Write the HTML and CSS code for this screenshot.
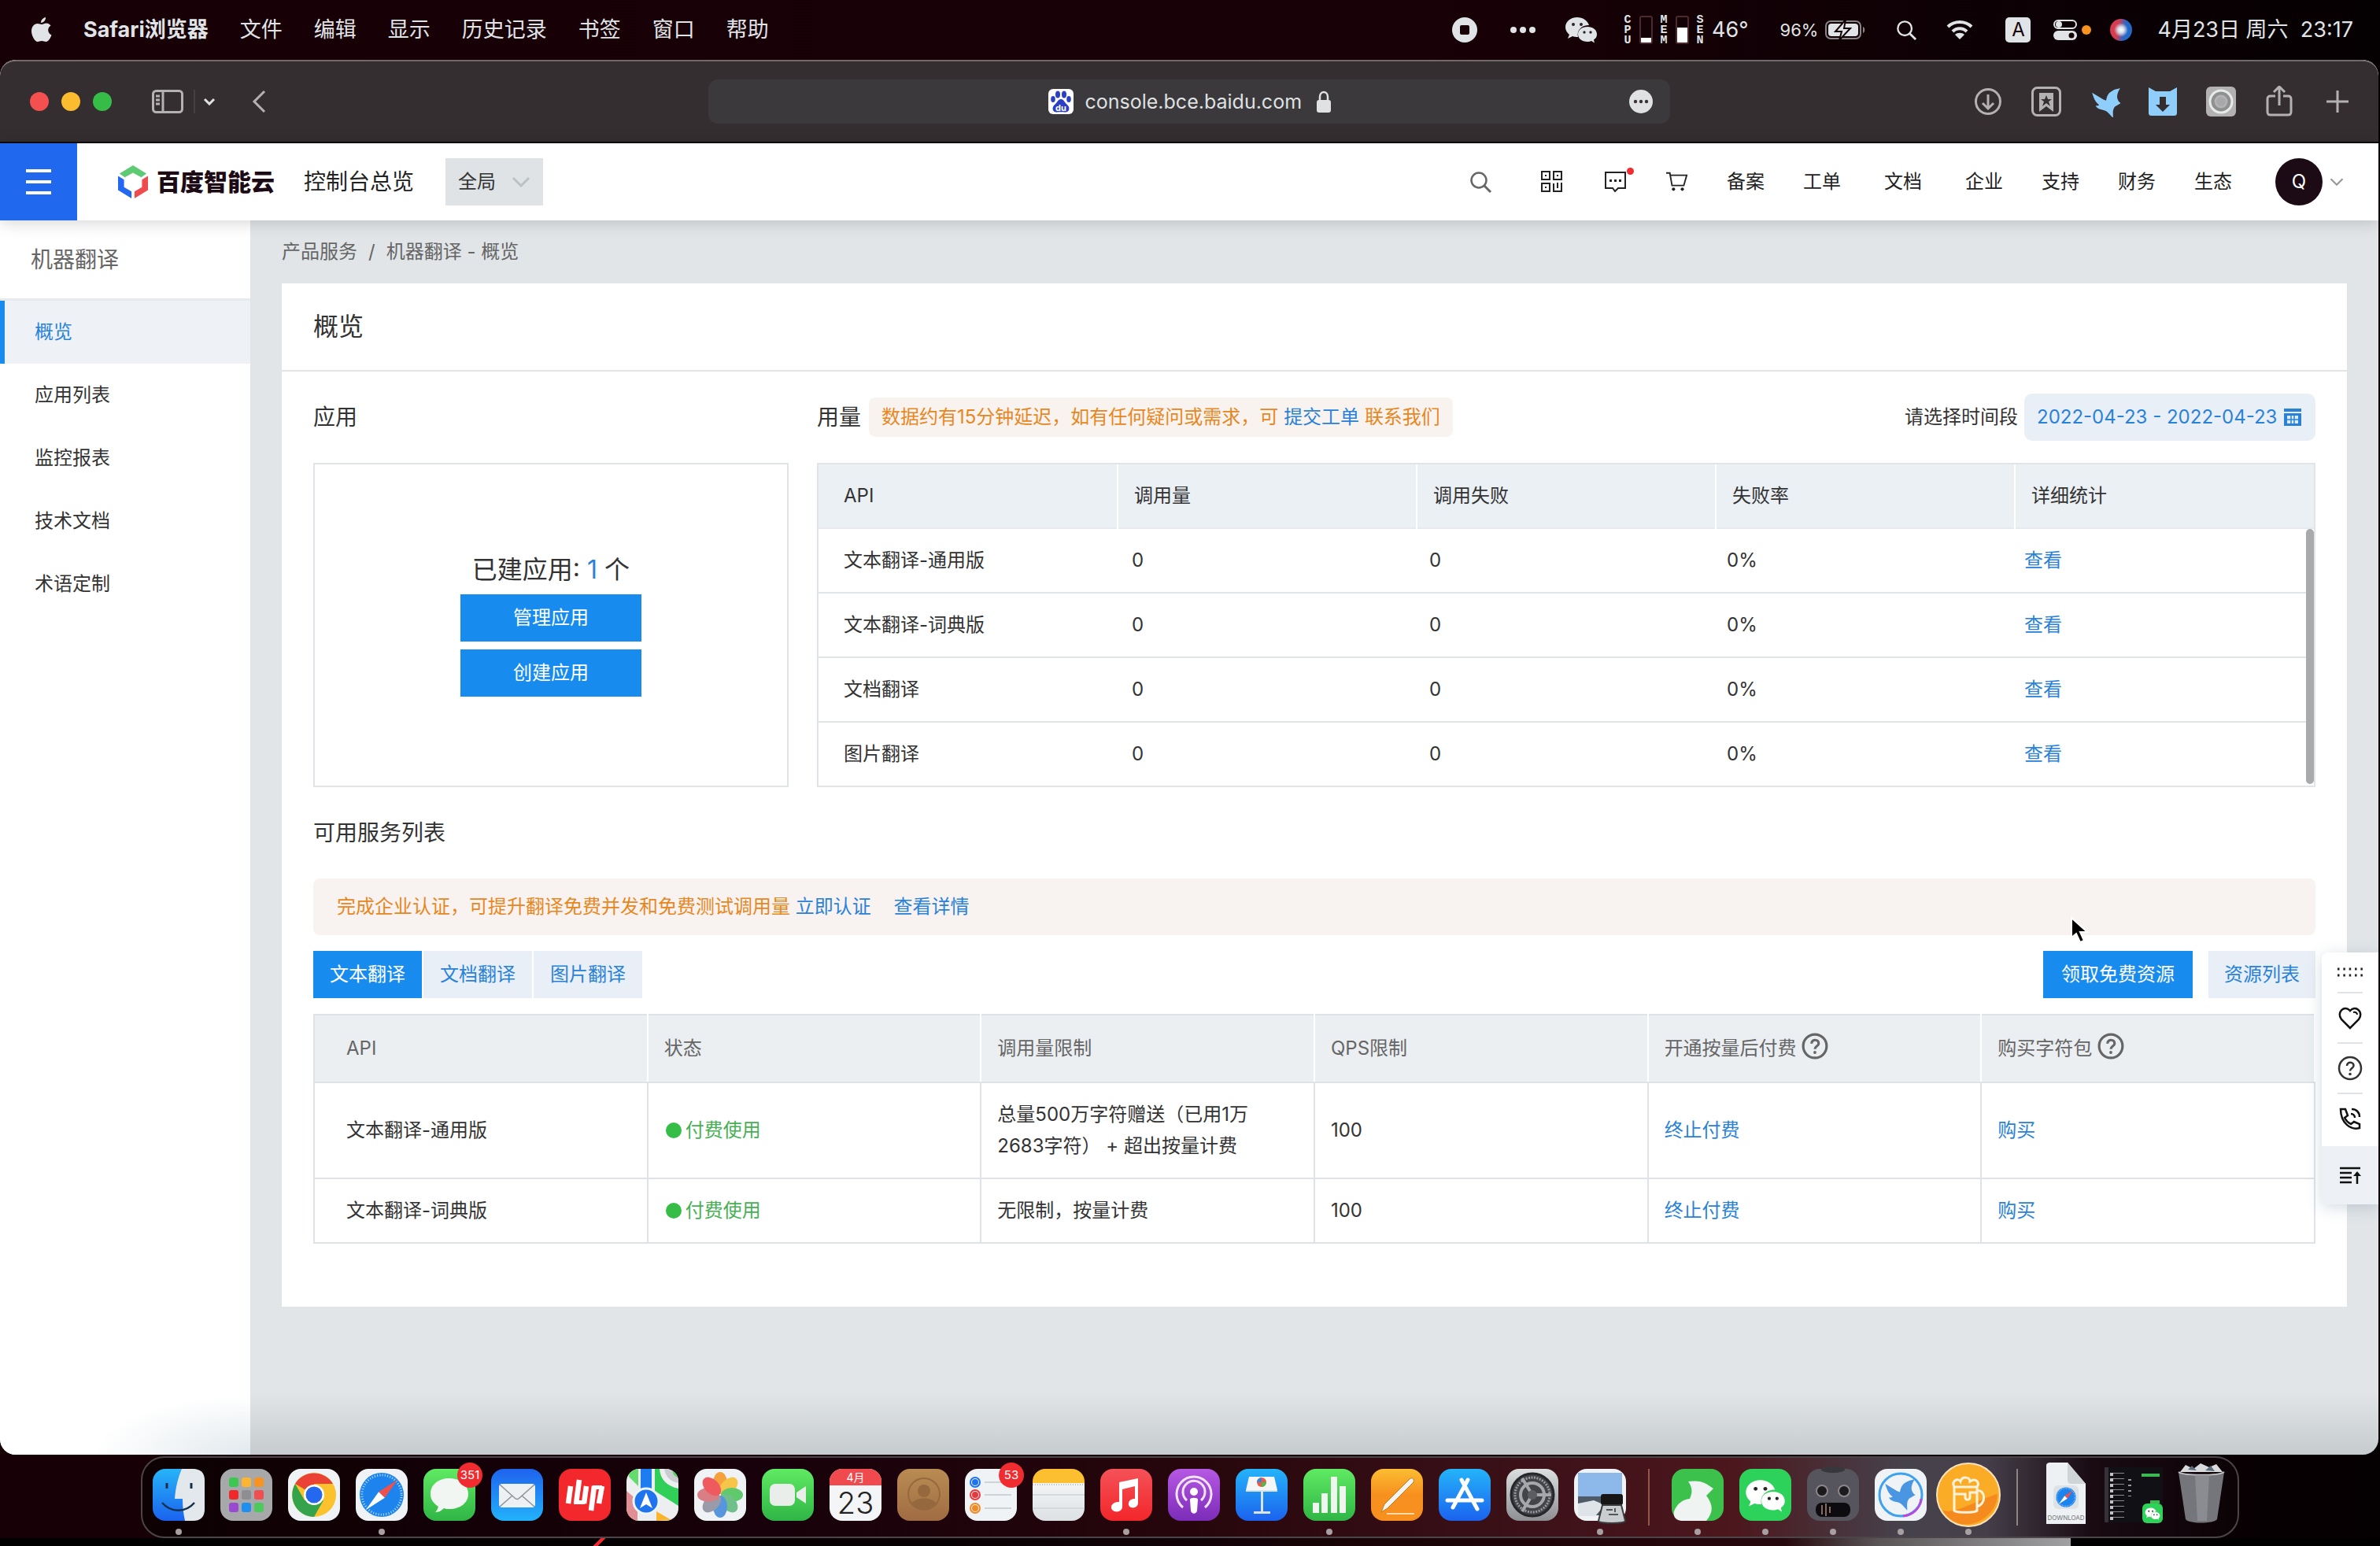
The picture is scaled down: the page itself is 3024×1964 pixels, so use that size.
FILE: index.html
```html
<!DOCTYPE html>
<html lang="zh-CN">
<head>
    <meta charset="UTF-8">
    <title>机器翻译 - 概览</title>
    <link rel="stylesheet" href="styles.css">
</head>
<body>
    <!-- 公用图形 -->
    <svg class="defs" aria-hidden="true">
        <symbol id="wechat" viewBox="0 0 42 34">
            <path d="M16 1C7 1 1 7 1 13.500c0 4 2 7 5 9.500l-2 5 6-3c2 .6 4 1 7 1-2-9 5-15 14-15C29 5 23 1 16 1z"/>
            <path d="M29 13c-7 0-12 4-12 9.500S22 32 29 32c2 0 3-.3 5-1l4 2.500-1-4c3-2 4-4 4-7C41 17 36 13 29 13z"/>
            <g class="eye"><circle cx="11" cy="10" r="2"/><circle cx="21" cy="10" r="2"/><circle cx="25" cy="20" r="1.700"/><circle cx="33" cy="20" r="1.700"/></g>
        </symbol>
        <symbol id="bird" viewBox="0 0 36 36">
            <path d="M2 6l13 8 3 1c1-6 3-9 7-11 3-2 6-2 9-3-3 5-4 9-3 12 1 3 2 4 4 5l-7 4c-3 4-2 7-2 13-4-4-6-8-11-9-6-1-8-3-9-5 2 0 3 0 4-1-4-3-6-7-8-14z"/>
        </symbol>
        <symbol id="question" viewBox="0 0 32 32">
            <circle cx="16" cy="16" r="14" fill="none" stroke="currentColor"/>
            <path d="M12 13c0-6 9-5.500 8.500 0-.3 3-4.500 3-4.500 6.500" fill="none" stroke="currentColor"/>
            <circle cx="16" cy="23.500" r="1.800" fill="currentColor"/>
        </symbol>
        <symbol id="magnifier" viewBox="0 0 28 28">
            <circle cx="12" cy="12" r="9.500" fill="none" stroke="currentColor" stroke-width="2.500"/>
            <path d="M19 19l8 8" stroke="currentColor" stroke-width="3"/>
        </symbol>
        <symbol id="down" viewBox="0 0 24 14">
            <path d="M2 2l10 10L22 2" fill="none" stroke="currentColor" stroke-width="3"/>
        </symbol>
        <symbol id="compass" viewBox="0 0 60 60">
            <circle cx="30" cy="30" r="29" fill="#1d84ee"/>
            <circle cx="30" cy="30" r="26" fill="none" stroke="#bfe2ff" stroke-width="3" stroke-dasharray="1 2.400"/>
            <path d="M51 10L26 26l8 8z" fill="#f0504a"/>
            <path d="M9 50l17-24 8 8z" fill="#fff"/>
        </symbol>
    </svg>

    <!-- 系统菜单栏 -->
    <div class="menubar">
        <svg class="apple" viewBox="0 0 26 32"><path d="M18 0c.3 4-3 7-6 7 0-4 3-6.500 6-7zM13 9c2 0 3-1.500 6-1.500 2.500 0 4.500 1.500 5.500 3-5 3-4 10 1 12-1.500 4-4 8.500-7 8.500-2 0-3-1-5.500-1S9.500 31 8 31C4 31 0 23 0 17.500S3.500 8 7.500 8C10 8 11.500 9 13 9z"/></svg>
        <b>Safari浏览器</b>
        <span>文件</span><span>编辑</span><span>显示</span><span>历史记录</span><span>书签</span><span>窗口</span><span>帮助</span>
        <div class="status">
            <svg class="s-rec" viewBox="0 0 32 32"><circle cx="16" cy="16" r="16" fill="#e0e4e6"/><rect x="10" y="10" width="12" height="12" rx="2" fill="#170207"/></svg>
            <svg class="s-dots" viewBox="0 0 32 8"><circle cx="4" cy="4" r="4"/><circle cx="16" cy="4" r="4"/><circle cx="28" cy="4" r="4"/></svg>
            <svg class="s-wechat"><use href="#wechat"/></svg>
            <span class="meter">C<br>P<br>U</span><i class="gauge low"></i>
            <span class="meter">M<br>E<br>M</span><i class="gauge high"></i>
            <span class="meter">S<br>E<br>N</span><span class="degree">46°</span>
            <span class="percent">96%</span>
            <svg class="s-battery" viewBox="0 0 52 26"><rect x="1" y="2" width="44" height="22" rx="6" fill="none" stroke="#8a8486" stroke-width="2"/><rect x="4" y="5" width="38" height="16" rx="4" fill="#e0e4e6"/><path d="M48 9c3 1 3 7 0 8z" fill="#8a8486"/><path d="M26 0L13 15h8l-3 11 14-15h-8z" fill="#e0e4e6" stroke="#120206" stroke-width="2"/></svg>
            <svg class="s-search"><use href="#magnifier"/></svg>
            <svg class="s-wifi" viewBox="0 0 34 26"><g fill="none" stroke="#e0e4e6" stroke-width="4"><path d="M2 9c8-8 22-8 30 0"/><path d="M8 15c5-5 13-5 18 0"/></g><path d="M11 19c3-3 9-3 12 0l-6 6z" fill="#e0e4e6"/></svg>
            <span class="ime">A</span>
            <svg class="s-control" viewBox="0 0 30 26"><rect x="1" y="1" width="28" height="10" rx="5" fill="none" stroke="#e0e4e6" stroke-width="2"/><circle cx="7" cy="6" r="4" fill="#e0e4e6"/><rect y="14" width="30" height="12" rx="6" fill="#e0e4e6"/><circle cx="23" cy="20" r="3.500" fill="#120206"/></svg>
            <i class="orange"></i><i class="siri"></i>
            <time>4月23日 周六&nbsp; 23:17</time>
        </div>
    </div>

    <div class="window">
        <!-- Safari 工具栏 -->
        <div class="toolbar">
            <div class="tools left">
                <div class="lights"><i class="red"></i><i class="yellow"></i><i class="green"></i></div>
                <button class="tool sidebar-btn" aria-label="边栏"><svg viewBox="0 0 40 30"><rect x="1.500" y="1.500" width="37" height="27" rx="4"/><path d="M14 1v28M5 8h5M5 13h5M5 18h5"/></svg></button>
                <button class="tool groups-btn" aria-label="标签页组"><svg viewBox="0 0 16 10"><path d="M2 2l6 6 6-6"/></svg></button>
                <button class="tool back-btn" aria-label="后退"><svg viewBox="0 0 18 30"><path d="M16 2L3 15l13 13"/></svg></button>
            </div>
            <div class="address">
                <svg class="favicon" viewBox="0 0 32 32"><rect width="32" height="32" rx="6" fill="#fff"/><g fill="#2a3fc4"><ellipse cx="12" cy="7" rx="3" ry="4.500"/><ellipse cx="20" cy="7" rx="3" ry="4.500"/><ellipse cx="6" cy="13" rx="2.800" ry="4"/><ellipse cx="26" cy="13" rx="2.800" ry="4"/><path d="M16 13c4 0 5 5 9 8 3 4 1 9-4 8.500-3-.5-7-.5-10 0C6 30 4 25 7 21c4-3 5-8 9-8z"/></g><text x="16" y="28" text-anchor="middle" font-size="11" font-weight="700" fill="#fff">du</text></svg>
                <input class="url" type="text" aria-label="网址" value="console.bce.baidu.com">
                <svg class="lock" viewBox="0 0 18 28"><rect y="12" width="18" height="16" rx="3" fill="#dfe1e3"/><path d="M4 13V8c0-8 10-8 10 0v5" fill="none" stroke="#dfe1e3" stroke-width="2.500"/></svg>
                <button class="page-menu" aria-label="页面菜单"><svg viewBox="0 0 30 30"><circle cx="15" cy="15" r="15" fill="#dfe1e3"/><g fill="#3a3436"><circle cx="8" cy="15" r="2.200"/><circle cx="15" cy="15" r="2.200"/><circle cx="22" cy="15" r="2.200"/></g></svg></button>
            </div>
            <div class="tools right">
                <button class="tool" aria-label="下载"><svg viewBox="0 0 40 40"><circle cx="20" cy="20" r="15.500"/><path d="M20 11v17M13 22l7 7 7-7"/></svg></button>
                <button class="tool" aria-label="收藏"><svg viewBox="0 0 40 40"><rect x="2.500" y="2.500" width="35" height="35" rx="6"/><path class="solid" d="M11 9h18v24l-9-7-9 7z"/><path class="hole" d="M20 12l2 5h5l-4 3 2 6-5-4-5 4 2-6-4-3h5z"/></svg></button>
                <button class="tool" aria-label="迅雷"><svg class="blue" viewBox="-2 -2 40 40"><use href="#bird"/></svg></button>
                <button class="tool" aria-label="下载助手"><svg class="cat" viewBox="0 0 40 40"><path d="M2 2l9 5h18l9-5v32c0 3-1 4-4 4H6c-3 0-4-1-4-4z"/><path d="M16 14h8v10h5L20 33l-9-9h5z" class="hole"/></svg></button>
                <button class="tool" aria-label="镜头"><svg viewBox="0 0 40 40"><rect class="solid" x="1" y="1" width="38" height="38" rx="6"/><circle cx="20" cy="20" r="14" fill="#8e9092" stroke="#e8eaea" stroke-width="3"/><circle cx="20" cy="20" r="7" fill="#a6a8a9"/></svg></button>
                <button class="tool" aria-label="共享"><svg viewBox="0 0 40 40"><path d="M15 13H9c-3 0-4 1-4 4v16c0 3 1 4 4 4h22c3 0 4-1 4-4V17c0-3-1-4-4-4h-6M20 25V2M13 8l7-7 7 7"/></svg></button>
                <button class="tool" aria-label="新标签页"><svg viewBox="0 0 40 40"><path d="M20 6v28M6 20h28"/></svg></button>
            </div>
        </div>

        <!-- 控制台顶栏 -->
        <header class="header">
            <button class="burger" aria-label="菜单"><i></i><i></i><i></i></button>
            <a class="logo" href="#">
                <svg viewBox="0 0 40 44"><path d="M20 0l18 11-7 5-11-6-11 6-7-5z" fill="#5fca74"/><path d="M0 14l8 5v10l10 6v9L0 33z" fill="#2468f2"/><path d="M40 14l-8 5v10l-10 6v9l18-11z" fill="#ee4c4f"/></svg>
                百度智能云
            </a>
            <a class="overview" href="#">控制台总览</a>
            <label class="region"><select aria-label="区域"><option>全局</option></select><svg><use href="#down"/></svg></label>
            <nav class="topnav">
                <button class="n-search" aria-label="搜索"><svg><use href="#magnifier"/></svg></button>
                <button class="n-qr" aria-label="二维码"><svg viewBox="0 0 28 28"><g fill="none" stroke="#222" stroke-width="2"><rect x="1" y="1" width="10" height="10"/><rect x="16" y="1" width="10" height="10"/><rect x="1" y="16" width="10" height="10"/><path d="M16 27V16M21 15v7M26 15v11H16"/></g><g fill="#222"><path d="M5 5h2v2H5zM20 5h2v2h-2zM5 20h2v2H5z"/></g></svg></button>
                <button class="n-msg" aria-label="消息"><svg viewBox="0 0 28 28"><path d="M1 2h25v20h-9l-4 4-3-4H1z" fill="none" stroke="#222" stroke-width="2"/><path d="M6 11h3v3H6zM12 11h3v3h-3zM18 11h3v3h-3z" fill="#222"/></svg><i class="dot"></i></button>
                <button class="n-cart" aria-label="购物车"><svg viewBox="0 0 30 28"><path d="M0 2h5l3 17h16l4-14H6" fill="none" stroke="#222" stroke-width="2"/><circle cx="10" cy="24" r="2.200" fill="#222"/><circle cx="22" cy="24" r="2.200" fill="#222"/></svg></button>
                <a href="#">备案</a><a href="#">工单</a><a class="wide" href="#">文档</a><a class="wide" href="#">企业</a><a href="#">支持</a><a href="#">财务</a><a href="#">生态</a>
                <button class="avatar">Q</button>
                <svg class="more"><use href="#down"/></svg>
            </nav>
        </header>

        <div class="page">
            <aside class="sidebar">
                <h2>机器翻译</h2>
                <a class="active" href="#">概览</a>
                <a href="#">应用列表</a>
                <a href="#">监控报表</a>
                <a href="#">技术文档</a>
                <a href="#">术语定制</a>
            </aside>

            <main class="main">
                <div class="crumbs"><a href="#">产品服务</a><span>/</span><span>机器翻译 - 概览</span></div>
                <section class="card">
                    <h1>概览</h1>
                    <div class="content">
                        <div class="top">
                            <div class="apps">
                                <div class="bar"><h3>应用</h3></div>
                                <div class="appbox">
                                    <p>已建应用: <a href="#">1</a> 个</p>
                                    <button class="btn">管理应用</button>
                                    <button class="btn">创建应用</button>
                                </div>
                            </div>
                            <div class="usage">
                                <div class="bar">
                                    <h3>用量</h3>
                                    <span class="tip">数据约有15分钟延迟，如有任何疑问或需求，可 <a href="#">提交工单</a> 联系我们</span>
                                    <label class="range-label" for="range">请选择时间段</label>
                                    <span class="range">
                                        <input id="range" type="text" value="2022-04-23 - 2022-04-23">
                                        <svg viewBox="0 0 22 22"><path d="M0 0h22v4H0zM0 6h22v16H0z" fill="#2a82d8"/><path d="M4 9h14v10H4z" fill="#dcecfa"/><path d="M4 14h14M9 9v10M13 9v10" stroke="#2a82d8" stroke-width="1.500"/></svg>
                                    </span>
                                </div>
                                <div class="stat">
                                    <table>
                                        <thead><tr><th>API</th><th>调用量</th><th>调用失败</th><th>失败率</th><th>详细统计</th></tr></thead>
                                    </table>
                                    <div class="scroll">
                                        <table>
                                            <tbody>
                                                <tr><td>文本翻译-通用版</td><td>0</td><td>0</td><td>0%</td><td><a href="#">查看</a></td></tr>
                                                <tr><td>文本翻译-词典版</td><td>0</td><td>0</td><td>0%</td><td><a href="#">查看</a></td></tr>
                                                <tr><td>文档翻译</td><td>0</td><td>0</td><td>0%</td><td><a href="#">查看</a></td></tr>
                                                <tr><td>图片翻译</td><td>0</td><td>0</td><td>0%</td><td><a href="#">查看</a></td></tr>
                                            </tbody>
                                        </table>
                                        <i class="thumb"></i>
                                    </div>
                                </div>
                            </div>
                        </div>

                        <h3 class="list-title">可用服务列表</h3>
                        <div class="notice">完成企业认证，可提升翻译免费并发和免费测试调用量 <a href="#">立即认证</a> <a class="detail" href="#">查看详情</a></div>
                        <div class="actions">
                            <button class="tab on">文本翻译</button><button class="tab">文档翻译</button><button class="tab">图片翻译</button>
                            <button class="btn free">领取免费资源</button>
                            <button class="tab res">资源列表</button>
                        </div>
                        <table class="service">
                            <thead>
                                <tr><th>API</th><th>状态</th><th>调用量限制</th><th>QPS限制</th><th>开通按量后付费 <svg><use href="#question"/></svg></th><th>购买字符包 <svg><use href="#question"/></svg></th></tr>
                            </thead>
                            <tbody>
                                <tr><td>文本翻译-通用版</td><td class="paid"><i></i>付费使用</td><td>总量500万字符赠送（已用1万<br>2683字符） + 超出按量计费</td><td>100</td><td><a href="#">终止付费</a></td><td><a href="#">购买</a></td></tr>
                                <tr><td>文本翻译-词典版</td><td class="paid"><i></i>付费使用</td><td>无限制，按量计费</td><td>100</td><td><a href="#">终止付费</a></td><td><a href="#">购买</a></td></tr>
                            </tbody>
                        </table>
                    </div>
                </section>
            </main>

            <!-- 悬浮工具条 -->
            <div class="float">
                <svg class="grip" viewBox="0 0 32 12"><path d="M0 2h32M0 10h32" stroke="#222" stroke-width="3" stroke-dasharray="2.500 4.850"/></svg>
                <button aria-label="收藏"><svg viewBox="0 0 32 32"><path d="M16 29L5 18C-2 9 9-1 16 7c7-8 18 2 11 11z" fill="none" stroke="#111" stroke-width="2.500"/><path d="M20 9c3-1 5 1 5 3" fill="none" stroke="#111" stroke-width="2"/></svg></button>
                <button aria-label="帮助"><svg class="q"><use href="#question"/></svg></button>
                <button aria-label="电话"><svg viewBox="0 0 32 32"><path d="M4 4h6l3 8-4 3c2 4 4 6 8 8l4-3 7 3v5C17 31 4 22 4 4z" fill="none" stroke="#111" stroke-width="2.500"/><path d="M17 10c3 0 5 2 5 5M18 4c6 0 10 4 10 10" fill="none" stroke="#111" stroke-width="2.500"/></svg></button>
                <button class="fold" aria-label="收起"><svg viewBox="0 0 32 32"><path d="M3 7h26M3 13h15M3 19h15M3 25h15M25 27V13" fill="none" stroke="#111" stroke-width="2.500"/><path d="M20 17l5-6 5 6z" fill="#111"/></svg></button>
            </div>
            <svg class="cursor" viewBox="0 0 24 36"><path d="M2 2v25l6-5 5 11 5-2-5-11h9z" fill="#000" stroke="#fff" stroke-width="2"/></svg>
        </div>
    </div>

    <!-- 程序坞 -->
    <div class="dock">
        <button class="app finder run" aria-label="访达"><svg viewBox="0 0 66 66"><path d="M37 0c-5 12-8 24-9 38h10c0 10 1 19 3 28h10c10 0 15-5 15-15V15C66 5 61 0 51 0z" fill="#e3e8ec"/><path d="M18 18v7M49 18v7" stroke="#14304e" stroke-width="3"/><path d="M12 43c11 13 30 13 41 0" fill="none" stroke="#14304e" stroke-width="2.500"/></svg></button>
        <button class="app grid" aria-label="启动台"><svg viewBox="0 0 66 66"><rect x="11" y="11" width="12" height="12" rx="3" fill="#3cc850"/><rect x="27" y="11" width="12" height="12" rx="3" fill="#fbb530"/><rect x="43" y="11" width="12" height="12" rx="3" fill="#f7931e"/><rect x="11" y="27" width="12" height="12" rx="3" fill="#f0282c"/><rect x="27" y="27" width="12" height="12" rx="3" fill="#8e8e92"/><rect x="43" y="27" width="12" height="12" rx="3" fill="#f04e50"/><rect x="11" y="43" width="12" height="12" rx="3" fill="#9a4ad0"/><rect x="27" y="43" width="12" height="12" rx="3" fill="#1d90f0"/><rect x="43" y="43" width="12" height="12" rx="3" fill="#4ccb5c"/></svg></button>
        <button class="app white" aria-label="Chrome"><svg viewBox="0 0 66 66"><circle cx="33" cy="33" r="28" fill="#fbc22e"/><path d="M33 33L9 19a28 28 0 0 1 48 0H33z" fill="#ea4335"/><path d="M9 19a28 28 0 0 0 24 42l12-21-24 0z" fill="#34a34c"/><circle cx="33" cy="33" r="13" fill="#fff"/><circle cx="33" cy="33" r="10.500" fill="#2468f0"/></svg></button>
        <button class="app white run" aria-label="Safari"><svg viewBox="0 0 66 66"><use href="#compass" x="4" y="4" width="58" height="58"/></svg></button>
        <button class="app lime" aria-label="信息"><svg viewBox="0 0 66 66"><path d="M33 12c-14 0-24 8-24 20 0 7 4 12 10 16-1 3-2 5-4 7 5 0 8-2 11-5 2 1 5 1 7 1 14 0 24-8 24-19S47 12 33 12z" fill="#f2f6f3"/></svg><span class="badge">351</span></button>
        <button class="app mail" aria-label="邮件"><svg viewBox="0 0 66 66"><rect x="10" y="19" width="46" height="30" rx="4" fill="#eef1f4"/><path d="M11 20l19 17c2 2 4 2 6 0l19-17M11 48l16-14M55 48L39 34" fill="none" stroke="#8d9298" stroke-width="1.500"/></svg></button>
        <button class="app redapp" aria-label="词典"><svg viewBox="0 0 66 66"><path d="M15 22l-3 22M26 14l-4 30M45 22l-4 31M55 22l-4 22M35 22l-3 22" fill="none" stroke="#fff" stroke-width="6.500"/><path d="M20 40h13v5H19zM43 21h12v5H42z" fill="#fff"/></svg></button>
        <button class="app map" aria-label="地图"><svg viewBox="0 0 66 66"><path d="M0 0h66v66H0z" fill="#eceef0"/><path d="M4 0h11v22L3 10z" fill="#62dc6c"/><path d="M36 0h6c1 14 10 22 24 25v22L36 28z" fill="#30cf58"/><path d="M48 0h18v18C55 16 50 10 48 0z" fill="#c9cdcf"/><path d="M58 0h8v11c-5-1-8-5-8-11z" fill="#50d660"/><path d="M18 0h14v30H18z" fill="#1d7df0"/><path d="M0 28l14 12v26C5 66 0 60 0 50z" fill="#e08f95"/><path d="M38 54l19 11-19 1z" fill="#fbb52c"/><circle cx="25" cy="41" r="16" fill="#1d74ee" stroke="#eef4fb" stroke-width="3"/><path d="M25 30l8 20-8-5-8 5z" fill="#fff"/></svg></button>
        <button class="app white" aria-label="照片"><svg viewBox="0 0 66 66"><g opacity=".85"><ellipse cx="33" cy="18" rx="9" ry="14" fill="#f7931e"/><ellipse cx="33" cy="18" rx="9" ry="14" fill="#f9bd2c" transform="rotate(45 33 33)"/><ellipse cx="33" cy="18" rx="9" ry="14" fill="#46c254" transform="rotate(90 33 33)"/><ellipse cx="33" cy="18" rx="9" ry="14" fill="#5cb87a" transform="rotate(135 33 33)"/><ellipse cx="33" cy="18" rx="9" ry="14" fill="#3c86d8" transform="rotate(180 33 33)"/><ellipse cx="33" cy="18" rx="9" ry="14" fill="#8c8c9c" transform="rotate(225 33 33)"/><ellipse cx="33" cy="18" rx="9" ry="14" fill="#d66a72" transform="rotate(270 33 33)"/><ellipse cx="33" cy="18" rx="9" ry="14" fill="#ee4044" transform="rotate(315 33 33)"/></g></svg></button>
        <button class="app lime" aria-label="FaceTime"><svg viewBox="0 0 66 66"><rect x="10" y="19" width="32" height="28" rx="7" fill="#e9eeea"/><path d="M44 30l12-8v22l-12-8z" fill="#e9eeea"/></svg></button>
        <button class="app calendar" aria-label="日历"><span class="month">4月</span><span class="day">23</span></button>
        <button class="app contacts" aria-label="通讯录"><svg viewBox="0 0 66 66"><circle cx="34" cy="32" r="20" fill="none" stroke="#95683e" stroke-width="2"/><circle cx="34" cy="28" r="8" fill="#95683e"/><path d="M18 45c4-10 28-10 32 0-8 9-24 9-32 0z" fill="#95683e"/></svg></button>
        <button class="app white" aria-label="提醒事项"><svg viewBox="0 0 66 66"><path d="M25 17h34M25 33h34M25 50h34" stroke="#c4c8cc" stroke-width="1.500"/><g stroke-width="2" fill="none"><circle cx="13" cy="17" r="6" stroke="#1d74ee"/><circle cx="13" cy="33" r="6" stroke="#e8383c"/><circle cx="13" cy="50" r="6" stroke="#f08a24"/></g><circle cx="13" cy="17" r="4" fill="#1d74ee"/><circle cx="13" cy="33" r="4" fill="#e8383c"/><circle cx="13" cy="50" r="4" fill="#f08a24"/></svg><span class="badge">53</span></button>
        <button class="app notes" aria-label="备忘录"><svg viewBox="0 0 66 66"><path d="M0 20h66" stroke="#8f9296" stroke-dasharray="1 2"/><path d="M0 33h66M0 50h66" stroke="#cfd3d6" stroke-width="1.500"/></svg></button>
        <button class="app redapp music run" aria-label="音乐"><svg viewBox="0 0 66 66"><path d="M24 17l24-5v31c0 9-14 8-12 0 1-4 5-5 8-5V22l-16 4v22c0 9-15 8-14 0 1-5 6-6 10-6z" fill="#fff"/></svg></button>
        <button class="app podcast" aria-label="播客"><svg viewBox="0 0 66 66"><g fill="none" stroke="#f0e4fa" stroke-width="3"><path d="M19 49a22 22 0 1 1 28 0"/><path d="M24 40a14 14 0 1 1 18 0"/></g><circle cx="33" cy="29" r="5" fill="#fff"/><path d="M28 39c0-3 10-3 10 0l-1 14c-1 5-7 5-8 0z" fill="#fff"/></svg></button>
        <button class="app azure" aria-label="Keynote"><svg viewBox="0 0 66 66"><path d="M17 10h32l4 17H13z" fill="#f4f6f8"/><path d="M13 27h40v2H13zM32 29h3v26h-3zM23 54h21v3H23z" fill="#dbe2e8"/><circle cx="33" cy="17" r="6" fill="#ee5a44"/><path d="M33 17v-6a6 6 0 0 0-6 6z" fill="#3c86d8"/><path d="M33 17h6a6 6 0 0 1-6 6z" fill="#4cba50"/></svg></button>
        <button class="app lime run" aria-label="Numbers"><svg viewBox="0 0 66 66"><path d="M12 43h8v13h-8zM23 31h8v25h-8zM35 10h8v46h-8zM46 22h8v34h-8z" fill="#eef6ee"/></svg></button>
        <button class="app pages" aria-label="Pages"><svg viewBox="0 0 66 66"><path d="M20 57h35" stroke="#fbd9a8" stroke-width="2"/><path d="M49 13c4-3 6 0 5 4L21 50l-8 5 4-10z" fill="#f4f4f2" stroke="#c27a1c"/></svg></button>
        <button class="app azure" aria-label="App Store"><svg viewBox="0 0 66 66"><path d="M37 14L18 49M29 14l20 37M11 40h44" stroke="#fff" stroke-width="5" stroke-linecap="round"/></svg></button>
        <button class="app gear" aria-label="系统偏好设置"><svg viewBox="0 0 66 66"><circle cx="33" cy="33" r="27" fill="#43444a" stroke="#26272b" stroke-width="3"/><circle cx="33" cy="33" r="22" fill="none" stroke="#9a9ca0" stroke-width="3" stroke-dasharray="2 1.500"/><circle cx="33" cy="33" r="15" fill="none" stroke="#a5a7ab" stroke-width="4"/><path d="M33 33L20 12M33 33L20 54M33 33h24" stroke="#a5a7ab" stroke-width="4"/><circle cx="33" cy="33" r="6" fill="#5b5d62"/></svg></button>
        <button class="app white run" aria-label="预览"><svg viewBox="0 0 66 66"><path d="M5 5h56v30H5z" fill="#8db8ea"/><path d="M5 35h56v24H5z" fill="#4f5b66"/><path d="M5 44l20-4 14 6-12 14H5z" fill="#dfe4e8"/><rect x="34" y="32" width="28" height="14" rx="3" fill="#161616"/><path d="M36 46h24l5 20c0 4-34 4-34 0z" fill="#c9cdd0" stroke="#3a3a3c" stroke-width="2"/><path d="M41 52h8M44 58h12M52 50v5" stroke="#55585a" stroke-width="2"/></svg></button>
        <i class="split warm"></i>
        <button class="app green run" aria-label="鹦鹉"><svg viewBox="0 0 66 66"><path d="M21 16c8-1 16-1 23 3l9 6-9 9c9 12 9 21 0 32H12c-9-1-10-8-9-12 4-10 11-15 20-16 4-9 3-15-2-22z" fill="#eff3f1"/></svg></button>
        <button class="app wx run" aria-label="微信"><svg viewBox="0 0 66 66"><use href="#wechat" x="7" y="13" width="52" height="42" fill="#fff"/></svg></button>
        <button class="app robot run" aria-label="摄像"><svg viewBox="0 0 66 66"><ellipse cx="33" cy="1" rx="15" ry="4" fill="#37373c"/><circle cx="19" cy="28" r="7" fill="#1b1b1e" stroke="#8d8588" stroke-width="2"/><circle cx="47" cy="28" r="7" fill="#1b1b1e" stroke="#8d8588" stroke-width="2"/><rect x="11" y="43" width="44" height="18" rx="8" fill="#0c0c0e"/><path d="M19 46v12M24 44v16M29 48v8" stroke="#8a6a62" stroke-width="2"/></svg></button>
        <button class="app white run" aria-label="迅雷"><svg viewBox="0 0 66 66"><circle cx="33" cy="33" r="27" fill="none" stroke="#3fa2ee" stroke-width="3"/><path d="M36 60c12-1 22-10 23-22" fill="none" stroke="#b44ae0" stroke-width="3"/><use href="#bird" x="11" y="12" width="42" height="42" fill="#4a96e2"/></svg></button>
        <button class="app run" aria-label="啤酒"><svg class="beer" viewBox="0 0 82 82"><circle cx="41" cy="41" r="40" fill="#fbac26" stroke="#fbe3c0" stroke-width="2"/><path d="M8 60c14 8 46-14 70-20 0 34-50 56-70 20z" fill="#f58b1e"/><g fill="none" stroke="#fff2dc" stroke-width="3"><path d="M23 31v30c0 3 29 3 29 0V31M52 36c10-3 13 16 0 20M23 40h14v5c1 3 6 3 6-1v-6h9"/><path d="M23 31c-4-8 5-12 8-7 2-7 12-6 12 0 7-5 13 1 9 7z"/></g></svg></button>
        <i class="split"></i>
        <button class="app" aria-label="下载"><svg viewBox="0 0 66 78" class="tall"><path d="M8 4c0-3 2-4 5-4h22l23 27v51H8z" fill="#eef1f3"/><path d="M35 0v22c0 4 2 5 6 5h17z" fill="#cfd4d7"/><rect x="17" y="29" width="32" height="30" rx="6" fill="#dde2e6"/><use href="#compass" x="20" y="31" width="26" height="26"/><text x="33" y="73" text-anchor="middle" font-size="8" fill="#777">DOWNLOAD</text></svg></button>
        <button class="app" aria-label="微信窗口"><svg viewBox="0 0 78 72" class="thumbwin"><path d="M2 0h74v70H2z" fill="#111014"/><path d="M2 0h5v70H2z" fill="#343238"/><path d="M11 7v62" stroke="#c4c0c4" stroke-width="4" stroke-dasharray="4 3"/><path d="M20 7v62" stroke="#8b878c" stroke-width="14" stroke-dasharray="1 6"/><path d="M49 10h23M60 44h12" stroke="#3cb950" stroke-width="4"/><path d="M34 15v22" stroke="#9b979c" stroke-width="4" stroke-dasharray="2 5"/><rect x="50" y="46" width="26" height="25" rx="6" fill="#2fd158"/><use href="#wechat" x="53" y="51" width="20" height="16" fill="#fff"/></svg></button>
        <button class="app" aria-label="废纸篓"><svg viewBox="0 0 66 78" class="tall"><path d="M6 12l7-9 10 5 9-7 11 5 9-4 8 10z" fill="#d8dadc"/><path d="M16 9l5-5 6 6zM38 10l7-6 5 7z" fill="#5b6b7a"/><path d="M4 12c8 5 50 5 58 0l-9 60c-4 6-36 6-40 0z" fill="#75767b"/><path d="M4 12c8 5 50 5 58 0" fill="none" stroke="#c0c2c5" stroke-width="2"/><path d="M25 16l3 58 12 0 3-58z" fill="#8b8c91"/></svg></button>
    </div>
</body>
</html>
```
FILE: styles.css
```css
*{
    box-sizing: border-box;
}
html{
    background-color: #050103;
}
body{
    margin: 0;
    min-height: 100vh;
    display: flex;
    flex-direction: column;
    font-family: Inter, "Noto Sans CJK SC", sans-serif;
    font-size: 24px;
    line-height: 40px;
    color: #333;
    background: linear-gradient(135deg, transparent 40%, #f2282c 42%, #f2282c 60%, transparent 62%) 25% 100% / 20px 10px no-repeat,
                linear-gradient(90deg, #000 0, #080103 40%, #200509 66%, #26090d 75%, #5a5658 79%, #a0a0a2 87%, #000 87%) bottom / 100% 10px no-repeat,
                linear-gradient(90deg, #170006 0, #180107 60%, #050002 100%);
}
button, input, select{
    font: inherit;
    color: inherit;
    border: 0;
    padding: 0;
    margin: 0;
    background: none;
}
a{
    color: #2a82d8;
    text-decoration: none;
}
h1, h2, h3, p{
    margin: 0;
    font-weight: 400;
}
svg{
    display: block;
    flex: none;
}
.defs{
    position: absolute;
    width: 0;
    height: 0;
}

/* 菜单栏 */
.menubar{
    height: 76px;
    padding: 0 34px 0 40px;
    display: flex;
    align-items: center;
    gap: 40px;
    font-size: 27px;
    color: #e0e4e6;
    white-space: nowrap;
}
.apple{
    width: 26px;
    height: 32px;
    fill: #e0e4e6;
}
.status{
    margin-left: auto;
    display: flex;
    align-items: center;
}
.s-rec{ width: 32px; height: 32px; margin-right: 42px; }
.s-dots{ width: 32px; height: 8px; margin-right: 37px; fill: #e0e4e6; }
.s-wechat{ width: 42px; height: 34px; margin-right: 32px; fill: #e0e4e6; }
.eye{ fill: #2c2428; }
.app .eye{ fill: #25a844; }
.meter{
    width: 12px;
    font-family: "Liberation Mono", monospace;
    font-size: 15px;
    font-weight: 700;
    line-height: 13px;
    text-align: center;
}
.gauge{
    width: 17px;
    height: 36px;
    margin: 0 8px 0 9px;
    border: 2px solid #4a2a2e;
    border-radius: 3px;
}
.gauge.low{ background: linear-gradient(0deg, #fff 6px, transparent 6px); }
.gauge.high{ background: linear-gradient(0deg, #fff 19px, transparent 19px); }
.degree{ margin-left: 9px; }
.percent{ font-size: 22px; margin: 0 9px 0 40px; }
.s-battery{ width: 52px; height: 26px; margin-right: 38px; }
.s-search{ width: 26px; height: 26px; margin-right: 38px; }
.s-wifi{ width: 34px; height: 26px; margin-right: 41px; }
.ime{
    width: 32px;
    height: 32px;
    margin-right: 29px;
    border-radius: 5px;
    background: #e0e4e6;
    color: #170207;
    font-size: 24px;
    line-height: 32px;
    text-align: center;
}
.s-control{ width: 30px; height: 26px; margin-right: 6px; }
.orange{
    width: 12px;
    height: 12px;
    margin-right: 24px;
    border-radius: 50%;
    background: #f7931e;
}
.siri{
    width: 28px;
    height: 28px;
    margin-right: 32px;
    border-radius: 50%;
    background: radial-gradient(circle at 50% 50%, #fff 0, #d6dce8 20%, transparent 45%), linear-gradient(100deg, #d83c50 35%, #2468c8 65%);
}

/* 浏览器窗口 */
.window{
    flex: 1;
    margin-right: 2px;
    display: flex;
    flex-direction: column;
    border-radius: 20px;
    overflow: hidden;
    background: #e1e5e8;
}
.toolbar{
    height: 106px;
    padding: 0 32px;
    display: flex;
    align-items: center;
    justify-content: space-between;
    background: #352e30;
    border-top: 2px solid #706a6c;
    border-bottom: 2px solid #0c0a0b;
    border-radius: 20px 20px 0 0;
}
.tools{
    flex: 1;
    display: flex;
    align-items: center;
}
.right{
    justify-content: flex-end;
    gap: 34px;
}
.tool svg{
    width: 40px;
    height: 40px;
    fill: none;
    stroke: #b4b1b2;
    stroke-width: 3;
}
.tool .solid{ fill: #b4b1b2; stroke: none; }
.tool .hole{ fill: #352e30; stroke: none; }
.tool .blue, .tool .cat{ fill: #8fcdfa; stroke: none; }
.lights{
    display: flex;
    gap: 16px;
    margin: 0 51px 0 6px;
}
.lights i{
    width: 24px;
    height: 24px;
    border-radius: 50%;
}
.red{ background: #f4504f; }
.yellow{ background: #fcbc30; }
.green{ background: #35bd48; }
.sidebar-btn{
    padding-right: 13px;
    border-right: 2px solid #463f41;
}
.sidebar-btn svg{ height: 30px; }
.groups-btn svg{ width: 16px; height: 10px; margin-left: 10px; stroke: #dfe1e3; }
.back-btn svg{ width: 18px; height: 30px; margin-left: 46px; }
.address{
    width: 1222px;
    height: 56px;
    display: flex;
    align-items: center;
    justify-content: center;
    position: relative;
    border-radius: 12px;
    background: #3b393b;
    color: #dfe1e3;
}
.favicon{ width: 32px; height: 32px; }
.url{
    width: 280px;
    margin: 0 14px 0 15px;
    font-size: 25px;
}
.lock{ width: 18px; height: 28px; }
.page-menu{
    position: absolute;
    right: 22px;
}
.page-menu svg{ width: 30px; height: 30px; }

/* 顶栏 */
.header{
    height: 98px;
    display: flex;
    align-items: center;
    position: relative;
    z-index: 2;
    background: #fff;
    color: #222;
    box-shadow: 0 2px 20px rgba(0, 0, 0, 0.18);
}
.header a{
    color: #222;
    white-space: nowrap;
}
.burger{
    width: 98px;
    height: 98px;
    display: flex;
    flex-direction: column;
    align-items: center;
    justify-content: center;
    gap: 10px;
    background: #2069ee;
}
.burger i{
    width: 32px;
    height: 4px;
    background: #fff;
}
.header .logo{
    margin-left: 52px;
    display: flex;
    align-items: center;
    gap: 11px;
    color: #1c0a14;
    font-size: 30px;
    font-weight: 900;
}
.logo svg{ width: 38px; height: 44px; }
.overview{
    margin-left: 37px;
    font-size: 28px;
}
.region{
    width: 124px;
    height: 60px;
    margin-left: 40px;
    padding: 0 16px;
    display: flex;
    align-items: center;
    justify-content: space-between;
    background: #dfe3e6;
    color: #333;
}
.region select{ appearance: none; }
.region svg{ width: 24px; height: 14px; color: #bcc1c4; }
.topnav{
    margin-left: auto;
    padding-right: 44px;
    display: flex;
    align-items: center;
}
.topnav a{ margin-left: 49px; }
.topnav a.wide{ margin-left: 55px; }
.topnav button svg{ width: 28px; height: 28px; }
.n-search{ color: #666; }
.n-qr{ margin-left: 63px; }
.n-msg{ margin-left: 53px; position: relative; }
.n-cart{ margin-left: 50px; }
.dot{
    position: absolute;
    right: -9px;
    top: -4px;
    width: 9px;
    height: 9px;
    border-radius: 50%;
    background: #f02c30;
}
.topnav .avatar{
    width: 60px;
    height: 60px;
    margin: 0 9px 0 55px;
    border-radius: 50%;
    background: #1c0a14;
    color: #fff;
}
.more{ width: 18px; height: 12px; color: #999; }

.page{
    flex: 1;
    display: flex;
    position: relative;
}
.page::after{
    content: "";
    position: absolute;
    left: 318px;
    right: 0;
    bottom: 0;
    height: 80px;
    background: linear-gradient(0deg, rgba(60, 70, 70, 0.16), transparent);
}
.sidebar{
    width: 318px;
    background: radial-gradient(ellipse at 100% 100%, #e2e9ed 0, #fff 70%) right bottom / 200px 76px no-repeat, #fff;
}
.sidebar h2{
    height: 102px;
    padding: 30px 39px 0;
    border-bottom: 3px solid #e6eaed;
    font-size: 28px;
    color: #666;
}
.sidebar a{
    display: block;
    padding-left: 44px;
    line-height: 80px;
    color: #333;
}
.sidebar a.active{
    padding-left: 38px;
    border-left: 6px solid #188cee;
    background: #eef2f7;
    color: #2a82d8;
}
.main{
    flex: 1;
    padding: 0 40px;
}
.crumbs{
    height: 80px;
    display: flex;
    align-items: center;
    gap: 14px;
    color: #666;
}
.crumbs a{ color: #666; }
.card{
    background: #fff;
    padding-bottom: 80px;
}
.card h1{
    padding: 0 40px;
    border-bottom: 2px solid #e1e5e8;
    font-size: 32px;
    line-height: 110px;
}
.content{
    padding: 0 40px;
}
h3{
    font-size: 28px;
}
.top{
    display: flex;
    gap: 36px;
}
.apps{ width: 604px; }
.usage{ flex: 1; }
.bar{
    height: 116px;
    display: flex;
    align-items: center;
}
.appbox{
    height: 412px;
    display: flex;
    flex-direction: column;
    align-items: center;
    justify-content: center;
    gap: 10px;
    border: 2px solid #e1e5e8;
}
.appbox p{
    font-size: 32px;
    line-height: 42px;
}
.btn{
    width: 230px;
    height: 60px;
    background: #188cee;
    color: #fff;
}
.tip{
    margin-left: 10px;
    padding: 0 16px;
    border-radius: 8px;
    line-height: 50px;
    background: #f9f3f0;
    color: #e8871e;
}
.range-label{
    margin-left: auto;
}
.range{
    height: 60px;
    margin-left: 8px;
    padding: 0 18px 0 16px;
    display: flex;
    align-items: center;
    gap: 6px;
    border-radius: 10px;
    background: #e9eff6;
    color: #2a82d8;
}
.range input{ width: 308px; }
.range svg{ width: 22px; height: 22px; }

/* 用量表 */
table{
    width: 100%;
    table-layout: fixed;
    border-collapse: collapse;
}
th, td{
    padding: 20px;
    text-align: left;
    font-weight: 400;
}
.stat{
    border: 2px solid #e1e5e8;
}
.stat th{
    background: #ebf0f5;
    border-left: 2px solid #fff;
}
.stat th:first-child, .stat td:first-child{
    padding-left: 32px;
    border-left: 0;
}
.scroll{
    position: relative;
    padding-right: 10px;
}
.stat thead tr{ border-bottom: 2px solid #e6eaee; }
.stat td{ border-bottom: 2px solid #e1e5e8; }
.stat tr:last-child td{ border-bottom: 0; }
.thumb{
    position: absolute;
    top: 0;
    right: 0;
    bottom: 2px;
    width: 10px;
    border-radius: 5px;
    background: #a9aaab;
}

/* 服务列表 */
.list-title{
    line-height: 116px;
}
.notice{
    padding: 16px 30px;
    border-radius: 8px;
    background: #f8f3f1;
    color: #e8871e;
}
.detail{ margin-left: 22px; }
.actions{
    display: flex;
    gap: 2px;
    margin: 20px 0;
}
.tab{
    width: 138px;
    height: 60px;
    background: #e9eff6;
    color: #2a82d8;
}
.tab.on{
    background: #188cee;
    color: #fff;
}
.free{
    width: 190px;
    margin-left: auto;
    margin-right: 18px;
}
.res{ width: 136px; }
.service{
    border: 2px solid #dfe3e7;
}
.service th{
    padding: 22px 20px;
    background: #ebeff2;
    border-right: 2px solid #fff;
    border-bottom: 2px solid #dfe3e7;
    color: #666;
}
.service td{
    padding: 20px;
    border: 2px solid #dfe3e7;
}
.service th:first-child, .service td:first-child{ padding-left: 40px; }
.service svg{
    width: 34px;
    height: 34px;
    display: inline-block;
    vertical-align: -6px;
    stroke-width: 3;
}
.paid{ color: #47b054; }
.paid i{
    width: 20px;
    height: 20px;
    margin: 0 5px 0 2px;
    display: inline-block;
    vertical-align: -2px;
    border-radius: 50%;
    background: #36bd48;
}

/* 悬浮条 */
.float{
    position: absolute;
    right: 0;
    top: 930px;
    width: 72px;
    display: flex;
    flex-direction: column;
    align-items: center;
    border-radius: 8px 0 0 8px;
    background: #fff;
    box-shadow: 0 4px 20px rgba(60, 90, 120, 0.22);
}
.grip{ width: 32px; height: 12px; margin: 19px 0; }
.float button{
    width: 32px;
    height: 64px;
    display: flex;
    align-items: center;
    justify-content: center;
    border-top: 2px solid #dfe3e7;
}
.float button svg{ width: 32px; height: 32px; stroke-width: 2.500; }
.float .fold{
    width: 72px;
    height: 74px;
    margin-top: 4px;
    border: 0;
    background: #edf1f5;
}
.cursor{
    position: absolute;
    right: 368px;
    top: 884px;
    width: 24px;
    height: 36px;
}

/* 程序坞 */
.dock{
    align-self: center;
    height: 104px;
    margin: 2px 0 10px;
    padding: 14px 13px;
    display: flex;
    gap: 20px;
    border: 2px solid #4b4448;
    border-radius: 30px;
    background: linear-gradient(90deg, #0d0103 0, #18010a 30%, #26060c 50%, #3c1118 66%, #4c171d 76%, #46424c 84%, #453f49 88%, #1a0b13 93%, #0c0306 100%);
}
.app{
    width: 66px;
    height: 66px;
    position: relative;
    border-radius: 16px;
}
.app svg{
    width: 66px;
    height: 66px;
    overflow: visible;
}
.run::after{
    content: "";
    position: absolute;
    left: 29px;
    bottom: -18px;
    width: 8px;
    height: 8px;
    border-radius: 50%;
    background: #a89fa2;
}
.badge{
    position: absolute;
    right: -9px;
    top: -8px;
    min-width: 32px;
    padding: 0 3px;
    border-radius: 16px;
    background: #f02c30;
    color: #fff;
    font-size: 15px;
    line-height: 32px;
}
.finder{ background: linear-gradient(#27b4f8, #1a62ee); }
.grid{ background: #a6a8aa; }
.white{ background: #f0f3f6; }
.lime{ background: linear-gradient(#5fea62, #2fb545); }
.mail{ background: linear-gradient(#1f63ee, #22b2fa); }
.redapp{ background: #f2282c; }
.music{ background: linear-gradient(#f45258, #f2262a); }
.map{ overflow: hidden; }
.contacts{ background: linear-gradient(#b98c52, #a06c44); }
.notes{ background: linear-gradient(#fcbf30 18px, #f2f4f5 18px, #dde1e4); }
.podcast{ background: linear-gradient(#b658e4, #7b2cb8); }
.azure{ background: linear-gradient(#24b4fa, #1b62ee); }
.pages{ background: linear-gradient(#fcbd32, #f7901e 50%); }
.gear{ background: linear-gradient(#dcdfe0, #8d8f92); }
.app.green{ background: #3cc24c; }
.wx{ background: #2cd25a; }
.robot{ background: #56545c; }
.calendar{
    overflow: hidden;
    display: flex;
    flex-direction: column;
    background: #f3f5f7;
    text-align: center;
}
.month{
    background: #f04a4e;
    color: #fff;
    font-size: 14px;
    line-height: 21px;
    width: 66px;
}
.day{
    width: 66px;
    color: #222;
    font-size: 38px;
    font-weight: 300;
    line-height: 44px;
}
.app .beer{
    width: 82px;
    height: 82px;
    margin: -8px;
}
.app .tall{ height: 78px; margin-top: -8px; }
.app .thumbwin{ width: 78px; height: 72px; margin: -2px -6px; }
.split{
    width: 2px;
    margin: 0 8px;
    background: #8a8486;
}
.warm{ background: #94584a; }
```
